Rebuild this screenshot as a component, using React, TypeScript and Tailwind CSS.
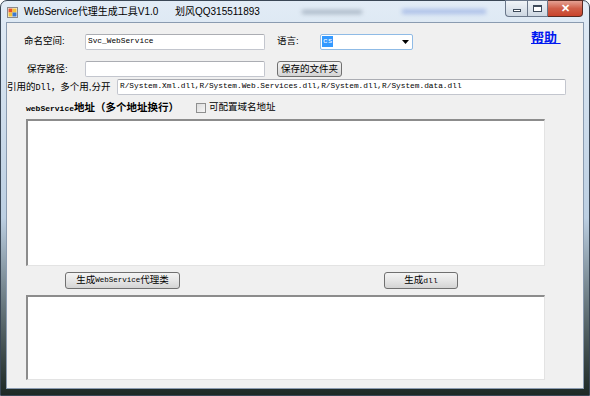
import React from "react";

const cjk = "font-['Liberation_Sans','Noto_Sans_CJK_SC',sans-serif]";
const mono = "font-['Liberation_Mono','Noto_Sans_CJK_SC',monospace]";

function TextBox({ className, value }: { className: string; value?: string }) {
    return (
        <div
            className={`${className} h-[16px] bg-white border border-[#c3c6ce] border-t-[#abadb3] rounded-[2px] flex items-center pl-[2px] ${mono} text-[7.8px] text-black`}
        >
            {value}
        </div>
    );
}

function Button({ className, children }: { className: string; children: React.ReactNode }) {
    return (
        <div
            className={`${className} border border-[#707070] rounded-[3px] bg-gradient-to-b from-[#f4f4f4] via-[#e6e6e6] via-50% to-[#d4d4d4] flex items-center justify-center text-black ${cjk} text-[9.5px]`}
        >
            {children}
        </div>
    );
}

function AppIcon() {
    return (
        <svg width="11" height="11" viewBox="0 0 11 11">
            <rect x="0.5" y="0.5" width="10" height="10" fill="#f4f4f4" stroke="#8a8a8a" />
            <rect x="1.5" y="1.5" width="4" height="4" fill="#e8542b" />
            <rect x="5.5" y="1.5" width="4" height="4" fill="#f3c23a" />
            <rect x="1.5" y="5.5" width="4" height="4" fill="#f3c23a" />
            <rect x="5.5" y="5.5" width="4" height="4" fill="#3c78d0" />
        </svg>
    );
}

export default function App() {
    return (
        <div className={`w-[590px] h-[396px] bg-white ${cjk}`}>
            <div className="h-full flex flex-col rounded-t-[7px] border border-[#3a4756] bg-gradient-to-b from-[#e2ecf6] via-[#bccfe2] via-55% to-[#1e2925] px-[5px] pb-[6px]">
                {/* title bar */}
                <div className="h-[21px] flex items-center">
                    <div className="ml-[1px] mt-[1px]">
                        <AppIcon />
                    </div>
                    <div className="ml-[6px] text-[10px] text-black whitespace-pre">
                        WebService代理生成工具V1.0      划风QQ315511893
                    </div>
                    <div className="ml-[42px] w-[60px] h-[4px] bg-[#6f7f92] blur-[2px] opacity-50" />
                    <div className="ml-[40px] w-[84px] h-[5px] bg-[#4a6fd0] blur-[2px] opacity-35" />
                    <div className="flex-1" />
                    <div className="self-start -mt-[1px] flex mr-[1px]">
                        <div className="w-[22px] h-[17px] border border-[#6a778a] border-r-0 rounded-bl-[4px] bg-gradient-to-b from-[#f0f4f8] to-[#cdd7e2] flex items-center justify-center">
                            <div className="w-[8px] h-[3px] border border-[#3d4a5a] bg-white mt-[3px]" />
                        </div>
                        <div className="w-[21px] h-[17px] border border-[#6a778a] bg-gradient-to-b from-[#f0f4f8] to-[#cdd7e2] flex items-center justify-center">
                            <div className="w-[9px] h-[7px] border border-[#3d4a5a] border-t-2 bg-white" />
                        </div>
                        <div className="w-[35px] h-[17px] border border-[#5a2a22] border-l-0 rounded-br-[4px] bg-gradient-to-b from-[#e4a193] via-[#cf5e48] via-50% to-[#c9432b] flex items-center justify-center text-white text-[11px] font-bold leading-none">
                            ✕
                        </div>
                    </div>
                </div>

                {/* client area */}
                <div className="flex-1 border border-[#8a9bb0] bg-[#f0f0f0] flex flex-col text-[9.5px] text-black">
                    <div className="mt-[10px] h-[17px] flex items-center pl-[17px]">
                        <div className="w-[61px]">命名空间:</div>
                        <TextBox className="w-[180px]" value="Svc_WebService" />
                        <div className="ml-[12px] w-[43px]">语言:</div>
                        <div className="w-[93px] h-[16px] bg-white border border-[#8fbbe6] rounded-[2px] flex items-center pl-[1px]">
                            <span className={`bg-[#3399ff] text-white ${mono} text-[7.8px] px-[1px] w-[11px] h-[11px] flex items-center`}>cs</span>
                            <div className="flex-1" />
                            <svg width="7" height="4" viewBox="0 0 7 4" className="mr-[3px]">
                                <path d="M0 0 H7 L3.5 4 Z" fill="#000" />
                            </svg>
                        </div>
                        <div className="ml-[118px] self-start -mt-[3px] text-[13px] font-bold text-[#0018f0] underline leading-[16px]">
                            帮助{"\u00a0"}
                        </div>
                    </div>

                    <div className="mt-[11px] h-[16px] flex items-center pl-[20px]">
                        <div className="w-[58px]">保存路径:</div>
                        <TextBox className="w-[180px]" />
                        <Button className="ml-[12px] w-[65px] h-[16px]">保存的文件夹</Button>
                    </div>

                    <div className="mt-[2px] h-[16px] flex items-center">
                        <div className="w-[110px]">
                            引用的<span className={`${mono} text-[8.5px]`}>Dll</span>，多个用,分开
                        </div>
                        <TextBox
                            className="w-[449px]"
                            value="R/System.Xml.dll,R/System.Web.Services.dll,R/System.dll,R/System.data.dll"
                        />
                    </div>

                    <div className="mt-[7px] h-[11px] flex items-center pl-[19px]">
                        <div className="w-[170px] font-bold text-[10.5px] whitespace-nowrap">
                            <span className={`${mono} text-[8px]`}>webService</span>地址（多个地址换行）
                        </div>
                        <div className="w-[10px] h-[10px] border border-[#8e8f8f] bg-gradient-to-br from-[#dcdcdc] to-[#f6f6f6]" />
                        <div className="ml-[3px]">可配置域名地址</div>
                    </div>

                    <div className="mt-[6px] ml-[19px] w-[519px] h-[147px] bg-white border-t-2 border-l-2 border-r border-b border-t-[#8c8c8c] border-l-[#8c8c8c] border-r-[#e3e3e3] border-b-[#e3e3e3]" />

                    <div className="mt-[6px] h-[17px] flex pl-[58px]">
                        <Button className="w-[115px] h-[17px]">
                            生成<span className={`${mono} text-[7.5px]`}>WebService</span>代理类
                        </Button>
                        <Button className="ml-[204px] w-[74px] h-[17px]">
                            生成<span className={`${mono} text-[8px]`}>dll</span>
                        </Button>
                    </div>

                    <div className="mt-[6px] ml-[19px] w-[519px] h-[85px] bg-white border-t-2 border-l-2 border-r border-b border-t-[#8c8c8c] border-l-[#8c8c8c] border-r-[#e3e3e3] border-b-[#e3e3e3]" />
                </div>
            </div>
        </div>
    );
}
